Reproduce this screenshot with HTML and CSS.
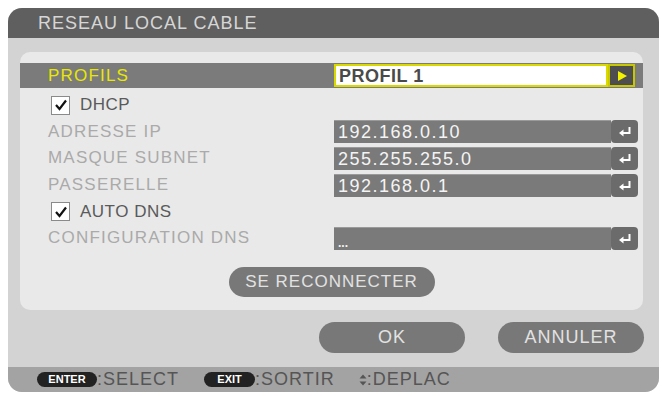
FILE: index.html
```html
<!DOCTYPE html>
<html lang="fr">
<head>
    <meta charset="UTF-8">
    <title>Reseau local cable</title>
    <link rel="stylesheet" href="styles.css">
</head>
<body>
<div class="window">
    <div class="titlebar">RESEAU LOCAL CABLE</div>

    <div class="panel">
        <div class="band">
            <span class="label active">PROFILS</span>
            <span class="select">PROFIL 1</span>
            <span class="next"><svg width="12" height="12" viewBox="0 0 12 12"><path d="M2 1 L11 6 L2 11 Z" fill="#f2f200"/></svg></span>
        </div>

        <div class="row">
            <span class="check"><svg width="14" height="12" viewBox="0 0 14 12"><path d="M2 6 L5.5 10 L12 1.5" stroke="#111" stroke-width="2.2" fill="none"/></svg></span>
            <span class="check-text">DHCP</span>
        </div>
        <div class="row">
            <span class="label">ADRESSE IP</span>
            <span class="field">192.168.0.10</span>
            <span class="enter"><svg width="14" height="11" viewBox="0 0 14 11"><path d="M11.5 1 V7 H5" stroke="#fff" stroke-width="2" fill="none"/><path d="M1 7 L5.5 3.5 L5.5 10.5 Z" fill="#fff"/></svg></span>
        </div>
        <div class="row">
            <span class="label">MASQUE SUBNET</span>
            <span class="field">255.255.255.0</span>
            <span class="enter"><svg width="14" height="11" viewBox="0 0 14 11"><path d="M11.5 1 V7 H5" stroke="#fff" stroke-width="2" fill="none"/><path d="M1 7 L5.5 3.5 L5.5 10.5 Z" fill="#fff"/></svg></span>
        </div>
        <div class="row">
            <span class="label">PASSERELLE</span>
            <span class="field">192.168.0.1</span>
            <span class="enter"><svg width="14" height="11" viewBox="0 0 14 11"><path d="M11.5 1 V7 H5" stroke="#fff" stroke-width="2" fill="none"/><path d="M1 7 L5.5 3.5 L5.5 10.5 Z" fill="#fff"/></svg></span>
        </div>
        <div class="row">
            <span class="check"><svg width="14" height="12" viewBox="0 0 14 12"><path d="M2 6 L5.5 10 L12 1.5" stroke="#111" stroke-width="2.2" fill="none"/></svg></span>
            <span class="check-text">AUTO DNS</span>
        </div>
        <div class="row">
            <span class="label">CONFIGURATION DNS</span>
            <span class="field dots">...</span>
            <span class="enter"><svg width="14" height="11" viewBox="0 0 14 11"><path d="M11.5 1 V7 H5" stroke="#fff" stroke-width="2" fill="none"/><path d="M1 7 L5.5 3.5 L5.5 10.5 Z" fill="#fff"/></svg></span>
        </div>

        <div class="center">
            <span class="pill wide">SE RECONNECTER</span>
        </div>
    </div>

    <div class="actions">
        <span class="pill">OK</span>
        <span class="pill">ANNULER</span>
    </div>

    <div class="footer">
        <span class="key">ENTER</span><span class="hint">:SELECT</span>
        <span class="key exit">EXIT</span><span class="hint">:SORTIR</span>
        <span class="updown"><svg width="8" height="12" viewBox="0 0 8 12"><path d="M4 0.5 L7.5 4.5 H0.5 Z M4 11.5 L7.5 7.5 H0.5 Z" fill="#555"/></svg></span><span class="hint">:DEPLAC</span>
    </div>
</div>
</body>
</html>
```

FILE: styles.css
```css
body
{
    margin:0;
    background-color:#ffffff;
    font-family:"Liberation Sans", Arial, sans-serif;
}
.window
{
    margin:8px 0 0 8px;
    width:651px;
    height:384px;
    background-color:#d3d3d3;
    border-radius:14px;
    overflow:hidden;
    display:flex;
    flex-direction:column;
}
.titlebar
{
    height:30px;
    line-height:31px;
    padding-left:30px;
    background-color:#5f5f5f;
    color:#d6d6d6;
    font-size:18px;
    letter-spacing:1px;
}
.panel
{
    margin:14px 16px 0 12px;
    height:258px;
    padding-top:11px;
    box-sizing:border-box;
    background-color:#e9e9e9;
    border-radius:10px;
}
.band
{
    height:25px;
    display:flex;
    align-items:center;
    padding-left:28px;
    background-color:#7b7b7b;
    margin-bottom:4px;
}
.label
{
    width:286px;
    font-size:17px;
    letter-spacing:1.2px;
    color:#aaaaaa;
}
.label.active
{
    color:#e8e800;
}
.select
{
    width:267px;
    height:19px;
    line-height:20px;
    padding-left:3px;
    background-color:#ffffff;
    border:2px solid #d9d900;
    color:#4a4a4a;
    font-size:18px;
    font-weight:bold;
    letter-spacing:0.5px;
}
.next
{
    width:23px;
    height:19px;
    display:flex;
    align-items:center;
    justify-content:center;
    background-color:#4e4e4e;
    border:2px solid #c8c800;
}
.row
{
    height:26.6px;
    display:flex;
    align-items:center;
    padding-left:28px;
}
.check
{
    width:17px;
    height:17px;
    margin-left:3px;
    margin-right:10px;
    display:flex;
    align-items:center;
    justify-content:center;
    background-color:#ffffff;
    border:1px solid #8a8a8a;
}
.check-text
{
    font-size:17px;
    letter-spacing:0.5px;
    color:#5a5a5a;
}
.field
{
    width:273px;
    height:22px;
    line-height:23px;
    padding-left:4px;
    background-color:#7a7a7a;
    border-top:1px solid #9a9a9a;
    color:#f4f4f4;
    font-size:18px;
    letter-spacing:1.5px;
}
.field.dots
{
    font-size:12px;
    line-height:30px;
    font-weight:bold;
    letter-spacing:0;
}
.enter
{
    width:27px;
    height:23px;
    display:flex;
    align-items:center;
    justify-content:center;
    background-color:#6b6b6b;
    border-radius:4px;
}
.center
{
    display:flex;
    justify-content:center;
    margin-top:15px;
}
.pill
{
    height:31px;
    line-height:31px;
    width:146px;
    text-align:center;
    background-color:#787878;
    border-radius:16px;
    color:#e2e2e2;
    font-size:18px;
    letter-spacing:1px;
}
.pill.wide
{
    width:206px;
    height:30px;
    line-height:30px;
    font-size:17px;
}
.actions
{
    display:flex;
    justify-content:flex-end;
    gap:33px;
    margin-top:12px;
    padding-right:15px;
}
.footer
{
    margin-top:auto;
    height:25px;
    display:flex;
    align-items:center;
    padding-left:29px;
    background-color:#a3a3a3;
    color:#555555;
}
.key
{
    width:60px;
    height:15px;
    line-height:15px;
    text-align:center;
    background-color:#222222;
    border-radius:8px;
    color:#ffffff;
    font-size:11px;
    font-weight:bold;
}
.key.exit
{
    width:51px;
    margin-left:25px;
}
.hint
{
    font-size:18px;
    letter-spacing:1px;
}
.updown
{
    margin-left:24px;
    display:flex;
    align-items:center;
}
```
